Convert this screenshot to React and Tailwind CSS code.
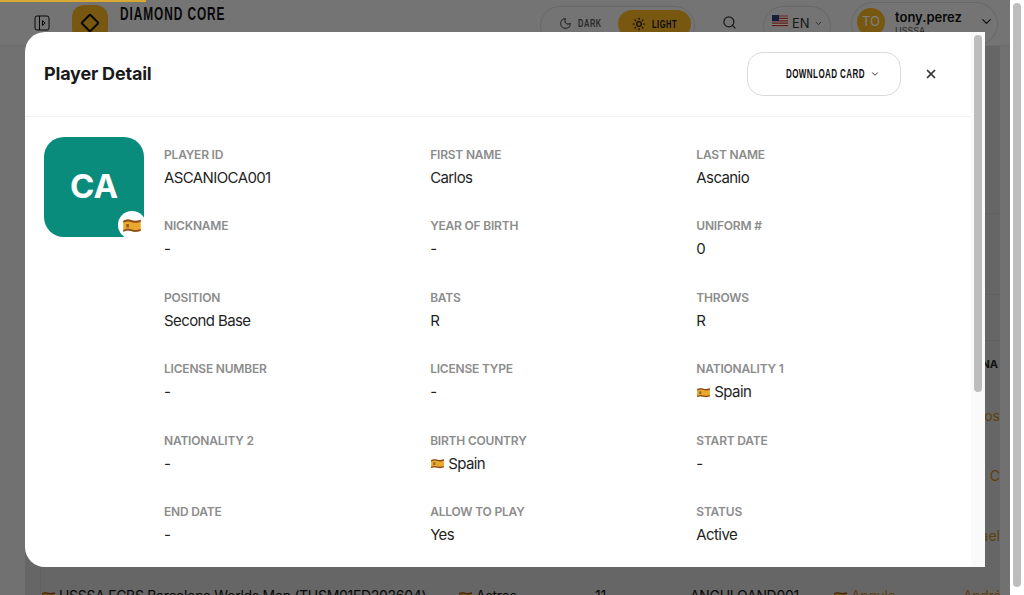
import React from 'react';
import { ChevronDown, Moon, Search, Sun, X } from 'lucide-react';

const FIELDS = [
  ['Player ID', 'ASCANIOCA001'],
  ['First Name', 'Carlos'],
  ['Last Name', 'Ascanio'],
  ['Nickname', '-'],
  ['Year of Birth', '-'],
  ['Uniform #', '0'],
  ['Position', 'Second Base'],
  ['Bats', 'R'],
  ['Throws', 'R'],
  ['License Number', '-'],
  ['License Type', '-'],
  ['Nationality 1', 'Spain', true],
  ['Nationality 2', '-'],
  ['Birth Country', 'Spain', true],
  ['Start Date', '-'],
  ['End Date', '-'],
  ['Allow to Play', 'Yes'],
  ['Status', 'Active'],
];

// wavy flag, same look as the emoji in the shot
const SpainFlag = ({ className }) => (
  <svg viewBox="0 0 16 12" className={className}>
    <path d="M1 2.2c3-1.4 5-1 7-.4s4 .8 7-.4v8.8c-3 1.2-5 1-7 .4s-4-1-7 .4z" fill="#e8a92e" />
    <path d="M1 2.2c3-1.4 5-1 7-.4s4 .8 7-.4v1.6c-3 1.2-5 1-7 .4s-4-1-7 .4z" fill="#8a4a22" />
    <path d="M1 9.6c3-1.4 5-1 7-.4s4 .8 7-.4v1.4c-3 1.2-5 1-7 .4s-4-1-7 .4z" fill="#8a4a22" />
    <rect x="3.5" y="4.8" width="2" height="2.8" fill="#8f5a24" />
  </svg>
);

const UsFlag = () => (
  <svg viewBox="0 0 16 12" className="h-3 w-4">
    <rect width="16" height="12" fill="#fff" />
    <path d="M0 1h16M0 3.4h16M0 5.8h16M0 8.2h16M0 10.6h16" stroke="#c0392b" strokeWidth="1.2" />
    <rect width="7" height="6" fill="#2c3e70" />
  </svg>
);

const SidebarIcon = () => (
  <svg viewBox="0 0 16 16" className="h-4 w-4" fill="none" stroke="#111" strokeWidth="1">
    <rect x="1" y="1" width="14" height="14" rx="2" />
    <path d="M5.5 1v14M8.5 5.5 11 8l-2.5 2.5z" />
  </svg>
);

// no condensed face is installed, so squeeze Liberation Sans inside a fixed box
const Narrow = ({ width, className, children }) => (
  <span className={`block shrink-0 ${width}`}>
    <span className={`inline-block origin-left whitespace-nowrap font-['Liberation_Sans',sans-serif] font-bold ${className}`}>{children}</span>
  </span>
);

const TopBar = () => (
  <header className="flex h-[46px] items-start border-b border-[#d8d8d8] bg-[#e8e8e8] pl-[34px] pr-[12px]">
    <div className="mt-[15px]"><SidebarIcon /></div>
    <div className="ml-[22px] mt-[5px] flex h-9 w-9 items-center justify-center rounded-xl bg-[#f0b020]">
      <div className="h-[14px] w-[14px] rotate-45 rounded-[2px] border-2 border-[#111]" />
    </div>
    <div className="ml-3 mt-[4px] leading-[20px]">
      <Narrow width="w-[104px]" className="scale-x-[.66] text-[18px] tracking-[1.4px] text-[#111]">DIAMOND CORE</Narrow>
    </div>

    <div className="ml-auto mt-[6px] flex h-[40px] w-[155px] items-start rounded-full border border-[#d0d0d0] p-[3px] pl-[18px]">
      <div className="mt-[5px] flex items-center gap-[6px] text-[11px] leading-4 text-[#555]">
        <Moon size={13} />
        <Narrow width="w-[24px]" className="scale-x-[.68] tracking-[.8px]">DARK</Narrow>
      </div>
      <div className="ml-auto flex h-[28px] w-[73px] items-center justify-center gap-[6px] rounded-full bg-[#f0b020] text-[11px] text-[#111]">
        <Sun size={14} />
        <Narrow width="w-[26px]" className="scale-x-[.68] tracking-[.8px]">LIGHT</Narrow>
      </div>
    </div>
    <Search size={15} className="ml-[27px] mt-[15px] text-[#333]" />
    <div className="ml-[26px] mt-[6px] flex h-[40px] w-[68px] items-start gap-1 rounded-full border border-[#d0d0d0] pl-2 pt-[8px] text-[13px] leading-4 text-[#333]">
      <UsFlag /> EN <ChevronDown size={9} className="mt-1" />
    </div>
    <div className="ml-5 mt-[2px] flex h-[44px] w-[147px] items-start rounded-full border border-[#d0d0d0] pl-[5px] pt-[5px]">
      <div className="flex h-7 w-7 items-center justify-center rounded-full bg-[#f0b020] text-[13px] text-white">TO</div>
      <div className="ml-[10px] mt-[1px]">
        <div className="text-[13px] leading-4 font-semibold text-[#111]">tony.perez</div>
        <div className="text-[9px] leading-3 text-[#555]">USSSA</div>
      </div>
      <ChevronDown size={15} className="ml-[17px] mt-[6px] text-[#222]" />
    </div>
  </header>
);

// what is left visible of the page behind the dialog
const PageBehind = () => (
  <main className="ml-[25px] mr-[10px] h-[560px] overflow-hidden bg-[#cdcdcd] pl-[15px] pt-[167px]">
    <div className="h-[82px] rounded-l-2xl border border-r-0 border-[#c2c2c2]" />
    <div className="mt-[45px] rounded-tl-2xl border-l border-t border-[#c2c2c2] text-[14px] leading-5">
      <div className="flex h-[45px] items-center justify-end pr-[2px] text-[11px] font-bold text-[#222]">NA</div>
      <div className="flex h-[60px] items-center justify-end text-[#b97f17]">los</div>
      <div className="flex h-[60px] items-center justify-end text-[#b97f17]">l C</div>
      <div className="flex h-[60px] items-center justify-end text-[#b97f17]">ael</div>
      <div className="flex h-[60px] items-center tracking-[-0.3px] text-[#111]">
        <div className="flex w-[417px] shrink-0 items-center gap-[3px] whitespace-nowrap"><SpainFlag className="h-[11px] w-[15px] shrink-0" /> USSSA FCBS Barcelona Worlds Men (TUSM01ED202604)</div>
        <div className="flex w-[137px] shrink-0 items-center gap-[3px]"><SpainFlag className="h-[11px] w-[15px] shrink-0" /> Astros</div>
        <div className="w-[95px] shrink-0">11</div>
        <div className="w-[143px] shrink-0">ANGULOAND001</div>
        <div className="flex w-[130px] shrink-0 items-center gap-[3px] text-[#b97f17]"><SpainFlag className="h-[11px] w-[15px] shrink-0" /> Angula</div>
        <div className="text-[#b97f17]">Andrés</div>
      </div>
    </div>
  </main>
);

const Field = ({ label, value, flag }) => (
  <div>
    <div className="text-[12px] leading-[16px] font-semibold tracking-[-0.2px] text-[#8c8c8c] uppercase">{label}</div>
    <div className="mt-[3px] flex items-center gap-[3px] text-[15px] leading-[24px] tracking-[-0.6px] text-[#1f1f1f]">
      {flag && <SpainFlag className="h-[11px] w-[15px]" />}
      {value}
    </div>
  </div>
);

const PlayerDetail = () => (
  <div className="flex h-[535px] w-[960px] overflow-hidden rounded-l-[20px] bg-white">
    <div className="min-w-0 flex-1">
      <div className="flex h-[85px] items-center border-b border-[#f0f0f0] pl-[19.5px] pr-[33px]">
        <h2 className="pb-[2px] text-[18px] font-bold tracking-[-0.2px] text-[#1a1a1a]">Player Detail</h2>
        <button className="ml-auto flex h-[44px] w-[154px] items-center gap-[6px] rounded-2xl border border-[#d9d9d9] pl-[38px] text-[12px] text-[#111]">
          <Narrow width="w-[78px]" className="scale-x-[.67] tracking-[.6px]">DOWNLOAD CARD</Narrow>
          <ChevronDown size={10} />
        </button>
        <X size={14} strokeWidth={3} className="ml-[23px] text-[#333]" />
      </div>
      <div className="flex items-start gap-5 pl-[19.5px] pr-5 pt-5">
        <div className="relative flex h-[100px] w-[100px] shrink-0 items-center justify-center rounded-[20px] bg-[#0a8c7c] text-[33px] font-bold text-white">
          CA
          <div className="absolute -bottom-[2px] -right-[2px] flex h-[28px] w-[28px] items-center justify-center rounded-full bg-white">
            <SpainFlag className="h-[15px] w-[20px]" />
          </div>
        </div>
        <div className="grid flex-1 grid-cols-3 gap-x-3 gap-y-[28.5px] pt-[9.5px]">
          {FIELDS.map(([label, value, flag]) => (
            <Field key={label} label={label} value={value} flag={flag} />
          ))}
        </div>
      </div>
    </div>
    {/* scrollbar of the dialog */}
    <div className="w-[14px] shrink-0 bg-[#fafafa] pl-[3.5px] pt-[3px]">
      <div className="h-[357px] w-2 rounded-full bg-[#bdbdbd]" />
    </div>
  </div>
);

export default function App() {
  return (
    <div className="relative flex h-screen overflow-hidden font-['Inter',sans-serif]">
      <div className="min-w-0 flex-1 overflow-hidden bg-[#e2e2e2]">
        <TopBar />
        <PageBehind />
      </div>
      {/* scrollbar of the page */}
      <div className="w-[14px] shrink-0 bg-white pl-[3px] pt-[3px]">
        <div className="h-[584px] w-2 rounded-full bg-[#bdbdbd]" />
      </div>
      <div className="absolute inset-y-0 left-0 right-[14px] bg-black/50 pl-[24.5px] pt-8">
        <PlayerDetail />
      </div>
      <div className="absolute left-0 top-0 h-[2px] w-[146px] bg-[#d9a830]" />
    </div>
  );
}
